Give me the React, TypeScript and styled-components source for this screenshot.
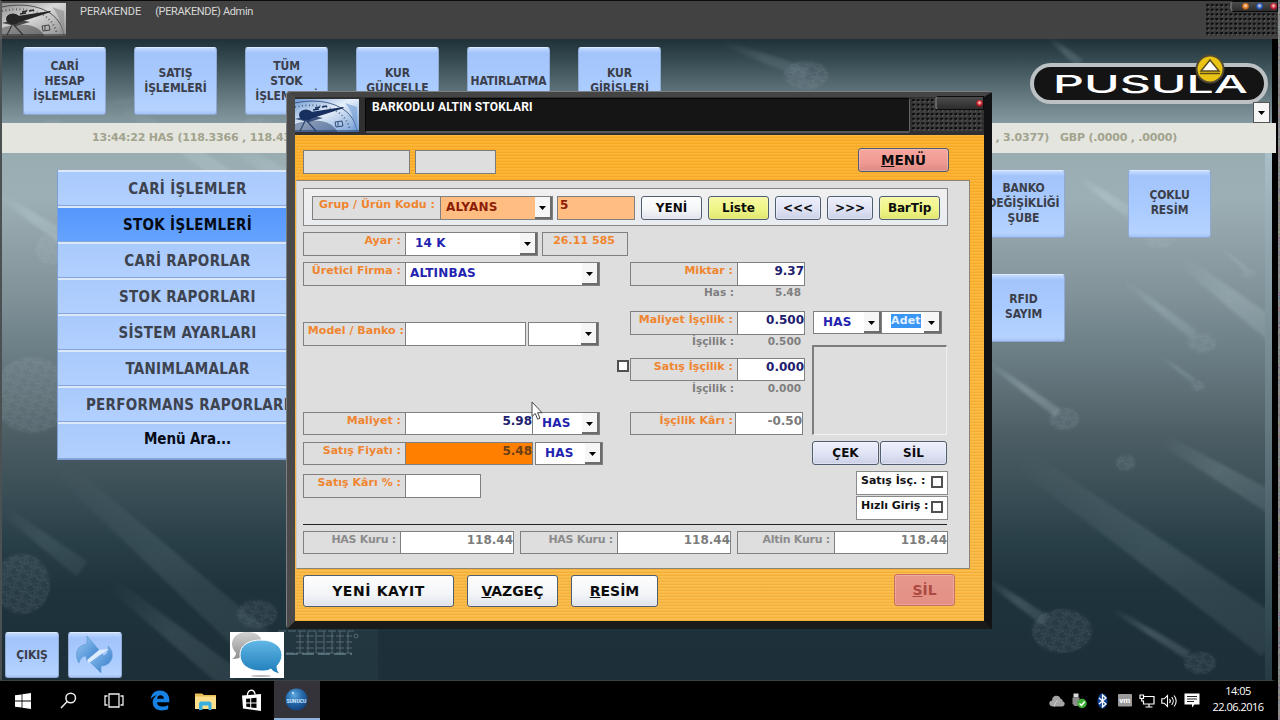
import React from 'react';
import styled, { createGlobalStyle, css } from 'styled-components';

const verdana = '"DejaVu Sans", Verdana, sans-serif';
const tahoma = '"DejaVu Sans Condensed", "DejaVu Sans", Tahoma, sans-serif';

const GlobalStyle = createGlobalStyle`
  * { box-sizing: border-box; }
  body { margin: 0; background: #000; overflow: hidden; font-family: ${verdana}; }
  button { margin: 0; padding: 0; font-family: inherit; }
`;

/* ---------- main window ---------- */

const Screen = styled.div`
  position: relative;
  width: 1280px;
  height: 720px;
  display: flex;
  flex-direction: column;
  overflow: hidden;
`;

const AppTitle = styled.header`
  height: 39px;
  flex: none;
  display: flex;
  align-items: flex-start;
  border-top: 1px solid #0b0b0b;
  border-left: 2px solid #5b5b5b;
  background: #424242;
  padding-top: 2px;
  color: #d8d8d8;
  font: 400 11px/15px Roboto, sans-serif;
`;

const TitleText = styled.span<{ $tight?: boolean }>`
  margin: 1px 14px 0 0;
  white-space: pre;
  letter-spacing: ${(p) => (p.$tight ? '-0.35px' : '-0.05px')};
`;

const TitleLogo = styled.div`
  width: 64px;
  height: 33px;
  margin-right: 14px;
  display: flex;
`;

const dots = css`
  background-color: #3a3a3a;
  background-image: radial-gradient(circle at 1.5px 2px, #0c0c0c 1.1px, transparent 1.5px),
    radial-gradient(circle at 2.5px 3.5px, #6a6a6a 0.5px, transparent 1px);
  background-size: 4.7px 4.7px;
`;

const TitleGrip = styled.div`
  ${dots}
  position: relative;
  width: 71px;
  height: 33px;
  margin-left: auto;
  margin-right: 3px;
`;

const ControlPill = styled.div<{ $w: number; $h: number }>`
  position: absolute;
  top: -2px;
  right: -1px;
  width: ${(p) => p.$w}px;
  height: ${(p) => p.$h}px;
  display: flex;
  align-items: center;
  justify-content: flex-end;
  gap: 7px;
  border: 1px solid #0c0c0c;
  border-left: 2px solid #666;
  border-radius: 4px 0 0 4px;
  background: linear-gradient(#4c4c4c, #2c2c2c);
`;

const Lamp = styled.i<{ $c: string }>`
  width: 7px;
  height: 7px;
  border-radius: 50%;
  background: radial-gradient(circle at 50% 40%, #ffe0d0 0, ${(p) => p.$c} 45%, #16161c 100%);
`;

const Desktop = styled.main`
  position: relative;
  flex: 1;
  display: flex;
  flex-direction: column;
  margin-right: 4px;
  border-left: 2px solid #4b5052;
  border-right: 4px solid #000;
  border-bottom: 1px solid #3b4346;
  background: linear-gradient(
    #203138 0px, #2f434b 15px, #5b6f77 50px, #8599a0 84px, #9aadb2 116px, #9cafb4 160px,
    #91a3a8 200px, #7f9197 262px, #6f8188 305px, #5d6f75 355px, #4b5d63 400px,
    #3b4f57 450px, #2a4049 500px, #1e333c 550px, #1d2f38 642px
  );
`;

const Backdrop = styled.svg`
  position: absolute;
  inset: 0;
`;

const EdgeGlow = styled.div`
  position: absolute;
  top: 114px;
  bottom: 0;
  right: 0;
  width: 7px;
  background: linear-gradient(#a9c0c8, #6d8289 45%, #243b44);
`;

const ShortcutBar = styled.nav`
  position: relative;
  height: 84px;
  flex: none;
  display: flex;
  gap: 28px;
  padding: 8px 0 0 21px;
`;

const Tile = styled.button<{ $small?: boolean }>`
  width: ${(p) => (p.$small ? 54 : 83)}px;
  height: ${(p) => (p.$small ? 46 : 68)}px;
  display: flex;
  align-items: center;
  justify-content: center;
  white-space: pre;
  text-align: center;
  border: 1px solid #8fa9d4;
  border-top-color: #dcebff;
  border-radius: 3px;
  background: linear-gradient(#c3dbff 0, #a3c4fb 5px, #abccff 60%, #b6d3ff 94%, #a3c2f5 100%);
  color: #3b3f4b;
  font: 700 12px/15px ${tahoma};
  letter-spacing: -0.1px;
`;

const ActionTile = styled(Tile)`
  padding-bottom: 2px;
`;

const BrandMark = styled.svg`
  position: absolute;
  left: 1027px;
  top: 15px;
`;

const CurrencyPicker = styled.button`
  position: absolute;
  right: 2px;
  bottom: 0;
  width: 17px;
  height: 21px;
  border: 1px solid #555;
  background: #f5f5f5;
  display: flex;
  align-items: center;
  justify-content: center;
`;

const Ticker = styled.div`
  position: relative;
  height: 30px;
  flex: none;
  display: flex;
  align-items: center;
  justify-content: space-between;
  margin-right: -4px;
  padding: 0 99px 0 90px;
  background: #e4e5df;
  color: #a2a38d;
  font: 700 11px/30px ${verdana};
  letter-spacing: -0.2px;
  white-space: pre;
`;

const Workspace = styled.div`
  position: relative;
  flex: 1;
  display: flex;
  justify-content: space-between;
  padding: 17px 62px 0 55px;
`;

const SideMenu = styled.nav`
  width: 261px;
  height: 290px;
  display: flex;
  flex-direction: column;
  border: 1px solid #7c9fd8;
  border-top: 0;
`;

const SideItem = styled.button<{ $active?: boolean; $search?: boolean }>`
  height: ${(p) => (p.$search ? '37px' : '36px')};
  flex: none;
  border: 0;
  border-top: 2px solid #dbe8fa;
  border-bottom: 1px solid #86a6d9;
  background: ${(p) =>
    p.$active ? 'linear-gradient(#5597fb, #65a3ff)' : 'linear-gradient(#a9cafd, #b2d0ff)'};
  color: ${(p) => (p.$active || p.$search ? '#050a14' : '#3d434f')};
  font: 700 15px/20px ${tahoma};
  letter-spacing: ${(p) => (p.$search ? '-0.1px' : '0.3px')};
  padding-bottom: ${(p) => (p.$search ? '5px' : '0')};
  white-space: nowrap;
`;

const ActionGrid = styled.div`
  display: grid;
  grid-template-columns: 83px 82px;
  grid-auto-rows: 68px;
  column-gap: 63px;
  row-gap: 36px;
  align-content: start;
`;

const BottomTools = styled.div`
  position: relative;
  display: flex;
  gap: 9px;
  padding: 0 0 2px 3px;
`;

const ChatTile = styled.div`
  width: 54px;
  height: 46px;
  margin-left: 99px;
  background: #fff;
`;

/* ---------- dialog ---------- */

const Dialog = styled.section`
  position: absolute;
  left: 287px;
  top: 92px;
  width: 705px;
  height: 537px;
  display: flex;
  flex-direction: column;
  border: solid;
  border-width: 5px 8px 8px 8px;
  border-color: #444 #101214 #1a1a1a #4a4a4a;
  border-radius: 4px 2px 0 3px;
  background: #2d2d2d;
  box-shadow: inset 1px 0 0 #2a2a2a, -1px -1px 0 #7b8183;
`;

const DialogHead = styled.div`
  height: 38px;
  flex: none;
  display: flex;
  gap: 6px;
  padding: 1px 0 3px;
  background: #303030;
`;

const DialogLogo = styled.div`
  width: 64px;
  height: 33px;
  margin-top: 1px;
  display: flex;
`;

const DialogTitle = styled.h1`
  width: 545px;
  height: 35px;
  margin: 0;
  padding: 1px 0 0 6px;
  border: 1px solid #060606;
  border-right-color: #666;
  border-bottom: 2px solid #5a5a5a;
  border-radius: 2px;
  background: #151515;
  color: #fff;
  font: 700 12px/14px Roboto, sans-serif;
  letter-spacing: 0.2px;
`;

const DialogGrip = styled.div`
  ${dots}
  position: relative;
  flex: 1;
  margin: 0 1px 0 -4px;
`;

const DialogBody = styled.div`
  flex: 1;
  display: flex;
  flex-direction: column;
  background: repeating-linear-gradient(#ffffff14 0 1px, transparent 1px 2px, #d8860a30 2px 3px),
    linear-gradient(#fdb02b, #fbb63a 50%, #f9ba46);
`;

const BodyTop = styled.div`
  height: 45px;
  flex: none;
  display: flex;
  gap: 5px;
  align-items: flex-start;
  padding: 13px 35px 0 8px;
  & > :last-child { margin-left: auto; }
`;

const StatusField = styled.div<{ $w: number; $h: number }>`
  width: ${(p) => p.$w}px;
  height: ${(p) => p.$h}px;
  margin-top: 2px;
  border: 1px solid #7c7c7c;
  background: #dedede;
`;

type Tone = 'white' | 'lime' | 'steel' | 'rose' | 'roseOff';
const tones: Record<Tone, string> = {
  white: 'linear-gradient(#fdfdfd, #f3f5f7 60%, #dfe3ea)',
  lime: 'linear-gradient(#f6f9a4, #eef483 60%, #dfe66f)',
  steel: 'linear-gradient(#eef0fb, #dde1f3 60%, #cbd0e6)',
  rose: 'linear-gradient(#f5a79d, #f09a92 60%, #dc8a84)',
  roseOff: 'linear-gradient(#e6988c, #e38f85)',
};

const PushButton = styled.button<{ $w: number; $h?: number; $tone?: Tone; $size?: number; $ls?: number }>`
  width: ${(p) => p.$w}px;
  height: ${(p) => p.$h ?? 24}px;
  flex: none;
  border: 1px solid ${(p) => (p.$tone === 'roseOff' ? '#cc6f5a' : '#4f5d70')};
  border-radius: 3px;
  background: ${(p) => tones[p.$tone ?? 'white']};
  box-shadow: inset 0 0 0 1px ${(p) => (p.$tone === 'steel' ? '#ffffff55' : '#ffffff33')};
  color: ${(p) => (p.$tone === 'roseOff' ? '#ad4a44' : '#0c0c0c')};
  font: 700 ${(p) => p.$size ?? 12}px/16px ${verdana};
  letter-spacing: ${(p) => p.$ls ?? 0}px;
  white-space: nowrap;
`;

const FormPanel = styled.div`
  width: 674px;
  height: 389px;
  flex: none;
  margin-left: 1px;
  padding: 7px 20px 0 6px;
  border: 1px solid #8b8474;
  border-left-color: #ccc;
  background: #dedede;
`;

const GroupBox = styled.div`
  width: 645px;
  height: 38px;
  display: flex;
  align-items: flex-start;
  padding: 7px 0 0 8px;
  border: 1px solid #858585;
  background: linear-gradient(#f0f0f0, #e9ecf0);
  & > ${PushButton} { margin-right: 6px; }
`;

const FormColumns = styled.div`
  display: flex;
  align-items: flex-start;
  height: 299px;
  width: 644px;
  border-bottom: 1px solid #222;
`;

const Column = styled.div<{ $w: number; $pad?: number }>`
  width: ${(p) => p.$w}px;
  flex: none;
  padding-left: ${(p) => p.$pad ?? 0}px;
  display: flex;
  flex-direction: column;
`;

const FieldRow = styled.div<{ $mt: number; $h?: number }>`
  height: ${(p) => p.$h ?? 24}px;
  margin-top: ${(p) => p.$mt}px;
  display: flex;
  flex: none;
  align-items: stretch;
`;

const FieldLabel = styled.label<{ $w: number; $muted?: boolean; $pad?: number }>`
  width: ${(p) => p.$w}px;
  flex: none;
  padding-right: ${(p) => p.$pad ?? 4}px;
  border: 1px solid #808080;
  background: #dedede;
  text-align: right;
  white-space: nowrap;
  color: ${(p) => (p.$muted ? '#8c8c8c' : '#f0852f')};
  font: 700 11px/16px ${verdana};
  letter-spacing: ${(p) => (p.$muted ? '-0.25px' : '0.03px')};
`;

const PurityTag = styled(FieldLabel)`
  margin-left: 4px;
`;

const ValueBox = styled.div<{ $w: number; $c?: string; $bg?: string }>`
  width: ${(p) => p.$w}px;
  flex: none;
  margin-left: -1px;
  padding: 1px 0 0 2px;
  border: 1px solid #808080;
  background: ${(p) => p.$bg ?? '#fff'};
  color: ${(p) => p.$c ?? '#20206e'};
  text-align: right;
  font: 700 12px/15px ${verdana};
`;

const CodeBox = styled(ValueBox)`
  margin: 0 6px 0 4px;
  text-align: left;
`;

const ComboShell = styled.div<{ $w: number; $bg?: string; $c?: string; $gap?: number; $pad?: number }>`
  width: ${(p) => p.$w}px;
  flex: none;
  margin-left: ${(p) => p.$gap ?? -1}px;
  display: flex;
  justify-content: space-between;
  align-items: stretch;
  padding-left: ${(p) => p.$pad ?? 9}px;
  border: 1px solid #808080;
  background: ${(p) => p.$bg ?? '#fff'};
  color: ${(p) => p.$c ?? '#2323b0'};
  font: 700 12px/20px ${verdana};
  letter-spacing: 0.15px;
`;

const ComboDrop = styled.span`
  width: 17px;
  display: flex;
  align-items: center;
  justify-content: center;
  padding-top: 2px;
  border: solid #6c6c6c;
  border-width: 0 2px 2px 0;
  background: #f6f6f6;
`;

const Marked = styled.mark`
  align-self: flex-start;
  margin-top: 2px;
  padding: 0;
  line-height: 14px;
  background: #3a96f4;
  color: #e4f2ff;
  font-size: 11px;
`;

const SubLine = styled.div<{ $mt?: number }>`
  height: 13px;
  margin-top: ${(p) => p.$mt ?? 0}px;
  display: flex;
  flex: none;
  justify-content: flex-end;
  padding-right: 11px;
  color: #7e7e7e;
  font: 700 10.5px/13px ${verdana};
  span { width: 67px; text-align: right; }
  span:first-child { width: auto; }
`;

const CheckBox = styled.i<{ $outside?: boolean }>`
  width: 12px;
  height: 12px;
  flex: none;
  border: 2px solid #505050;
  background: #fdfdfd;
  ${(p) => p.$outside && 'margin: 2px 1px 0 -13px;'}
`;

const CheckCard = styled.div<{ $mt: number }>`
  width: 92px;
  height: 24px;
  margin: ${(p) => p.$mt}px 0 0 auto;
  display: flex;
  justify-content: space-between;
  padding: 0 4px;
  border: 1px solid #8a8a8a;
  background: #fff;
  color: #111;
  font: 700 11px/17px ${verdana};
  white-space: nowrap;
  ${CheckBox} { margin-top: 4px; }
`;

const PictureFrame = styled.div`
  width: 135px;
  height: 90px;
  margin-top: 11px;
  border: solid;
  border-width: 2px 1px 1px 2px;
  border-color: #7d7d7d #efefef #f3f3f3 #7d7d7d;
`;

const PictureActions = styled(FieldRow)`
  gap: 1px;
`;

const Rates = styled.div`
  display: flex;
  gap: 6px;
  margin-top: 6px;
`;

const Rate = styled.div`
  display: flex;
  height: 23px;
`;

const DialogFoot = styled.div`
  flex: 1;
  display: flex;
  gap: 13px;
  align-items: flex-start;
  padding: 6px 29px 0 8px;
  & > :last-child { margin: -1px 0 0 auto; }
`;

const Pointer = styled.svg`
  position: absolute;
  left: 531px;
  top: 401px;
`;

/* ---------- taskbar ---------- */

const Taskbar = styled.footer`
  height: 39px;
  flex: none;
  display: flex;
  align-items: stretch;
  background: #000;
  color: #fff;
  padding-right: 12px;
`;

const TaskButton = styled.div<{ $active?: boolean }>`
  width: 45.7px;
  display: flex;
  align-items: center;
  justify-content: center;
  ${(p) => p.$active && 'background: #333339; border-bottom: 2px solid #8fb4dc;'}
`;

const Tray = styled.div`
  margin-left: auto;
  display: grid;
  grid-template-columns: repeat(7, 22.4px) 65px;
  align-items: center;
  justify-items: center;
`;

const Clock = styled.div`
  padding: 0 0 3px 5px;
  text-align: center;
  font: 400 11px/16px "Open Sans", sans-serif;
  letter-spacing: -0.5px;
`;

const NoiseEdge = styled.svg`
  position: absolute;
  right: 0;
  top: 0;
`;

/* ---------- drawings ---------- */

const Arrow = () => (
  <svg width="7" height="4" viewBox="0 0 7 4"><path d="M0 0h7L3.5 4z" fill="#000" /></svg>
);

const Combo = ({ children, ...rest }: React.ComponentProps<typeof ComboShell>) => (
  <ComboShell {...rest}>
    {typeof children === 'string' ? <span>{children}</span> : children ?? <span />}
    <ComboDrop><Arrow /></ComboDrop>
  </ComboShell>
);

const WatchFace = ({ id, light, mid, dark }: { id: string; light: string; mid: string; dark: string }) => (
  <svg width="64" height="33" viewBox="0 0 64 33">
    <defs>
      <linearGradient id={id} x1="0" y1="0" x2="1" y2="1">
        <stop offset="0" stopColor={mid} />
        <stop offset=".45" stopColor={light} />
        <stop offset="1" stopColor={mid} />
      </linearGradient>
    </defs>
    <rect width="64" height="33" fill={`url(#${id})`} />
    <path d="M0 25c14-5 34-6 42 7v1H0z" fill={dark} opacity=".45" />
    <path d="M0 4C28-2 58 6 62 32" fill="none" stroke={dark} strokeWidth="1" opacity=".7" />
    <path d="M0 8C26 3 50 9 55 31" fill="none" stroke={dark} strokeWidth="2" strokeDasharray="1 2.5" opacity=".6" />
    <path d="M62 8v25h-5C60 24 59 14 50 4" fill={mid} opacity=".6" />
    <ellipse cx="11" cy="16" rx="7" ry="5.500" fill={dark} />
    <path d="M9 14L48 8l1 1L12 21z" fill={dark} />
    <path d="M0 20l14-4 14 3-14 4z" fill={dark} opacity=".8" />
    <path d="M12 22l9 10M10 22L5 32" stroke={dark} strokeWidth="1.200" opacity=".8" />
    <path d="M40 23l7-1 1 5-7 1zM43 23v4" fill="none" stroke={dark} opacity=".8" />
    <path d="M20 9l5-1m2 0l5-1M18 11l6-1" stroke={dark} strokeWidth="1.300" />
    <rect y="31" width="64" height="2" fill={dark} opacity=".5" />
  </svg>
);

const gems: [number, number, number, number][] = [
  [190, 56, 16, 9], [255, 93, 20, 14], [30, 356, 40, 38], [52, 90, 14, 10], [48, 210, 14, 16],
  [804, 36, 22, 14], [1062, 380, 15, 11], [1200, 304, 14, 10], [1157, 200, 16, 9],
  [1060, 592, 30, 22], [1198, 624, 16, 11], [1196, 347, 7, 5], [1124, 424, 10, 8],
  [20, 545, 28, 30], [255, 575, 20, 14], [1246, 234, 7, 5],
];

const beams: [number, number, number, number, number, number][] = [
  [92, 68, 190, 50, 6, 0.1], [112, 60, 300, 190, 20, 0.2], [228, 105, 300, 150, 20, 0.16],
  [0, 158, 60, 198, 13, 0.28], [720, 4, 804, 34, 12, 0.12], [1048, 0, 1078, 24, 9, 0.18],
  [1076, 138, 1128, 174, 11, 0.28], [1122, 242, 1192, 296, 10, 0.2], [1180, 222, 1272, 292, 22, 0.22],
  [984, 322, 1056, 374, 9, 0.28], [1160, 318, 1192, 342, 5, 0.18], [1160, 400, 1272, 465, 22, 0.15],
  [1020, 420, 1272, 600, 42, 0.12], [984, 540, 1044, 582, 11, 0.18], [1110, 570, 1186, 616, 9, 0.2],
  [60, 430, 260, 610, 36, 0.1], [0, 470, 80, 530, 18, 0.1], [110, 545, 230, 641, 24, 0.12],
  [1220, 210, 1244, 230, 4, 0.18],
];

const Scenery = () => (
  <Backdrop width="1270" height="641" viewBox="0 0 1270 641">
    <defs>
      <pattern id="facet" width="11" height="9" patternUnits="userSpaceOnUse" patternTransform="rotate(23)">
        <path d="M0 3l4-3 6 4-4 4-6-2z M4 0l2 8M0 6l10-2" fill="none" stroke="#c6d8dd" strokeWidth=".9" />
      </pattern>
      <filter id="soften" x="-10%" y="-10%" width="120%" height="120%"><feGaussianBlur stdDeviation="1.6" /></filter>
      {beams.map(([x1, y1, x2, y2, , o], i) => (
        <linearGradient key={i} id={`beam${i}`} gradientUnits="userSpaceOnUse" x1={x1} y1={y1} x2={x2} y2={y2}>
          <stop offset="0" stopColor="#c8dde3" stopOpacity="0" />
          <stop offset=".5" stopColor="#c8dde3" stopOpacity={o} />
          <stop offset="1" stopColor="#c8dde3" stopOpacity={o * 0.7} />
        </linearGradient>
      ))}
    </defs>
    <g filter="url(#soften)">
      {beams.map(([x1, y1, x2, y2, w], i) => {
        const len = Math.hypot(x2 - x1, y2 - y1);
        const nx = -(y2 - y1) / len;
        const ny = (x2 - x1) / len;
        const a = w * 0.25;
        const b = w * 0.5;
        return (
          <path
            key={i}
            d={`M${x1 + nx * a} ${y1 + ny * a}L${x2 + nx * b} ${y2 + ny * b}L${x2 - nx * b} ${y2 - ny * b}L${x1 - nx * a} ${y1 - ny * a}z`}
            fill={`url(#beam${i})`}
          />
        );
      })}
      {gems.map(([x, y, rx, ry], i) => (
        <ellipse key={i} cx={x} cy={y} rx={rx} ry={ry} fill="#b4cbd2" opacity=".07" />
      ))}
    </g>
    {gems.map(([x, y, rx, ry], i) => (
      <ellipse key={i} cx={x} cy={y} rx={rx} ry={ry} fill="url(#facet)" opacity=".1" />
    ))}
    <rect x="282" y="590" width="94" height="51" fill="#2b414a" opacity=".4" />
    <g fill="none" stroke="#7b8a90" opacity=".6">
      <path d="M276 592h76M294 597h56M294 603h56M294 609h56M284 614h66" strokeDasharray="8 2" />
      <path d="M298 592v22M306 592v22M314 592v22M322 592v22M330 592v22M338 592v22M346 592v22" />
      <circle cx="354" cy="597" r="2" />
    </g>
    <path d="M284 615h66" stroke="#6f8f9a" strokeWidth="2" strokeDasharray="12 4" opacity=".6" />
  </Backdrop>
);

const Brand = () => (
  <BrandMark width="240" height="56" viewBox="0 0 240 56">
    <rect x="3" y="11" width="234" height="37" rx="18.500" fill="#141414" stroke="#bcc1c4" strokeWidth="4" />
    <text
      x="24" y="39" fill="#fff" fontFamily="Inter, sans-serif" fontWeight="500" fontSize="24"
      textLength="195" lengthAdjust="spacingAndGlyphs"
    >
      PUSULA
    </text>
    <circle cx="181" cy="15" r="13.500" fill="#e9c415" stroke="#504a35" strokeWidth="2" />
    <path d="M181 6l9 11h-18z" fill="#fff" stroke="#5c4c1c" strokeWidth="1.500" />
    <path d="M171 19.500h20" stroke="#5c4c1c" strokeWidth="1.500" />
  </BrandMark>
);

const SyncIcon = () => (
  <svg width="40" height="40" viewBox="0 0 40 40">
    <defs>
      <linearGradient id="sync" x1="0" y1="0" x2="1" y2="1">
        <stop offset="0" stopColor="#9ccdf5" /><stop offset="1" stopColor="#2f76c6" />
      </linearGradient>
    </defs>
    <path d="M4 28C0 22 1 14 6 11c2-1 4-2 6-2L12 1l12 14 2 3-14 8-1-5c-4 0-6 3-7 7z" fill="url(#sync)" stroke="#5a96d4" strokeWidth=".6" />
    <path d="M33 11c5 4 6 12 1 17-2 2-5 3-8 3v7L13 25l13-9 2 5c4-1 6-5 5-10z" fill="url(#sync)" stroke="#5a96d4" strokeWidth=".6" />
    <path d="M12 25l12-10 10-1-9 6-11 8z" fill="#dcecfe" />
  </svg>
);

const ChatIcon = () => (
  <svg width="54" height="46" viewBox="0 0 54 46">
    <defs>
      <linearGradient id="chatBlue" x1="0" y1="0" x2="0" y2="1">
        <stop offset="0" stopColor="#63b8e6" /><stop offset="1" stopColor="#1d7cba" />
      </linearGradient>
      <linearGradient id="chatGrey" x1="0" y1="0" x2="0" y2="1">
        <stop offset="0" stopColor="#d2d2d2" /><stop offset="1" stopColor="#8e8e8e" />
      </linearGradient>
    </defs>
    <path d="M17 0C7 0 2 6 2 12c0 4 2 7 4 9 0 3-2 5-4 6 5 0 8-1 11-4h8c8-2 11-6 11-12S27 0 17 0z" fill="url(#chatGrey)" />
    <path d="M31 8c12 0 21 6 21 15 0 5-3 9-5 11 0 3 1 6 3 8-4-1-7-2-9-5-3 2-6 2-10 2-12 0-21-6-21-16S19 8 31 8z" fill="url(#chatBlue)" stroke="#fff" />
    <ellipse cx="31" cy="44" rx="10" ry="1" fill="#bbb" />
  </svg>
);

const WindowsIcon = () => (
  <svg width="16" height="16" viewBox="0 0 16 16" fill="#fff">
    <path d="M0 2.300l6.600-.9v6.200H0zM7.400 1.300L16 0v7.600H7.400zM0 8.400h6.600v6.200L0 13.700zM7.400 8.400H16V16l-8.600-1.200z" />
  </svg>
);

const SearchIcon = () => (
  <svg width="17" height="17" viewBox="0 0 17 17" fill="none" stroke="#eee" strokeWidth="1.500">
    <circle cx="10.700" cy="6" r="4.800" /><path d="M7.200 9.600L1 16" />
  </svg>
);

const TaskViewIcon = () => (
  <svg width="20" height="15" viewBox="0 0 20 15" fill="none" stroke="#eee" strokeWidth="1.300">
    <path d="M5 1h10v13H5zM3.500 3H1v9h2.500M16.500 3H19v9h-2.500" />
  </svg>
);

const EdgeIcon = () => (
  <svg width="20" height="21" viewBox="0 0 20 21">
    <path
      d="M.5 9.400C1.300 3.800 5 .5 10 .5c6 0 9.300 4.300 9.300 9.500v2.200H7c.1 3 2.600 4.300 5.400 4.300 2.100 0 4-.5 5.800-1.600v4.200c-1.900 1-4.200 1.400-6.400 1.400-5.500 0-9.100-3.300-9.100-8.200 0-3.100 1.700-5.700 4.300-7.100C4.200 5.700 2 7 .5 9.400zM7.100 8.700h6.800c0-2.300-1.300-3.500-3.300-3.500-2.100 0-3.400 1.600-3.500 3.500z"
      fill="#1683e4"
    />
  </svg>
);

const FolderIcon = () => (
  <svg width="21" height="18" viewBox="0 0 21 18">
    <path d="M0 1.500h7l2 1.500h12v14H0z" fill="#e7bd55" />
    <path d="M0 4.500h21V17H0z" fill="#fbdf8c" />
    <path d="M4 18v-6.500c0-1 1-2 2-2h8.500c1 0 2 1 2 2V18h-3v-4.500h-6V18z" fill="#39aee0" />
  </svg>
);

const StoreIcon = () => (
  <svg width="21" height="23" viewBox="0 0 21 23">
    <path d="M6.500 8C6 4 7.500 1.500 10 1.200c2.300-.2 3.800 1.300 4 4.300" fill="none" stroke="#fff" strokeWidth="1.400" />
    <path d="M1 6.500l19-1.500v17L2 19.500z" fill="#fff" />
    <path d="M5 9.800l4.200-.4v4.100H5.200zM10.200 9.300l5.300-.6v4.800h-5.300zM5.200 14.500h4v3.700l-3.900-.5zM10.200 14.500h5.300v4.600l-5.300-.7z" fill="#000" />
  </svg>
);

const GlobeIcon = () => (
  <svg width="23" height="23" viewBox="0 0 23 23">
    <defs>
      <radialGradient id="globe" cx=".4" cy=".3" r=".75">
        <stop offset="0" stopColor="#5fa8dd" /><stop offset=".5" stopColor="#2469ac" /><stop offset="1" stopColor="#123e78" />
      </radialGradient>
    </defs>
    <circle cx="11.500" cy="11.500" r="11" fill="url(#globe)" />
    <circle cx="8" cy="5" r="1.200" fill="#b7e0ff" />
    <text x="1.500" y="14.500" fontFamily="Roboto, sans-serif" fontWeight="700" fontSize="5" fill="#d6eaff">SUNUCU</text>
  </svg>
);

const CloudIcon = () => (
  <svg width="16" height="12" viewBox="0 0 16 12">
    <path d="M4 11.500C1.500 11.500.3 10 .3 8.500c0-1.700 1.300-2.800 2.900-2.900C3 2.500 5 .8 7.500.8c2 0 3.600 1 4 2.900 1.500.2 2.300 1.300 2.200 2.500 1.300.4 2 1.400 2 2.600 0 1.500-1.200 2.700-2.700 2.700z" fill="#a5a5a5" />
    <path d="M5.500 11.500C5.500 8 7 6.500 9 6" stroke="#d6d6d6" fill="none" />
  </svg>
);

const UsbIcon = () => (
  <svg width="15" height="16" viewBox="0 0 15 16">
    <path d="M1.500.5h5v4h-5z" fill="#d8d8d8" /><path d="M.5 4.500h7v6L5.500 13h-3L.5 10.500z" fill="#8d8d8d" />
    <circle cx="10" cy="10.500" r="4.700" fill="#3fae35" /><path d="M7.500 10.500l2 2 3.200-4" stroke="#fff" strokeWidth="1.500" fill="none" />
  </svg>
);

const BluetoothIcon = () => (
  <svg width="15" height="16" viewBox="0 0 15 16">
    <ellipse cx="7.500" cy="8" rx="5" ry="7.500" fill="#0c3f94" />
    <path d="M4 5l7 6-3.500 3V2L11 5l-7 6" fill="none" stroke="#fff" strokeWidth="1.300" />
  </svg>
);

const VmIcon = () => (
  <svg width="14" height="13" viewBox="0 0 14 13">
    <rect width="14" height="12.500" rx="1" fill="#9b9b9b" />
    <text x="1.200" y="8.500" fontFamily="Roboto, sans-serif" fontWeight="700" fontSize="8" fill="#fff">vm</text>
  </svg>
);

const NetworkIcon = () => (
  <svg width="16" height="14" viewBox="0 0 16 14" fill="none" stroke="#fff" strokeWidth="1.200">
    <path d="M5 2.500h10v7.500H4.500V7M6.500 13h7M10 10v3" /><path d="M1 1h3.500v3.500H1zM2.700 4.500V7H5" />
  </svg>
);

const SpeakerIcon = () => (
  <svg width="17" height="14" viewBox="0 0 17 14" fill="none" stroke="#fff" strokeWidth="1.100">
    <path d="M.8 4.800h2.400L6.500 1.500v11L3.200 9.200H.8zM8.500 5c1 1.200 1 2.800 0 4M10.700 3.200c2 2.200 2 5.400 0 7.600M13 1.500c2.900 3.200 2.900 7.800 0 11" />
  </svg>
);

const NoteIcon = () => (
  <svg width="16" height="15" viewBox="0 0 16 15">
    <path d="M.5.500h15V11.500H10.500L8 14.500V11.500H.5z" fill="#fff" />
    <path d="M3 3.500h10M3 6h10M3 8.500h7" stroke="#222" />
  </svg>
);

const shortcuts = [
  'CARİ\nHESAP\nİŞLEMLERİ', 'SATIŞ\nİŞLEMLERİ', 'TÜM\nSTOK\nİŞLEMLERİ',
  'KUR\nGÜNCELLE', 'HATIRLATMA', 'KUR\nGİRİŞLERİ',
];
const menuItems = [
  'CARİ İŞLEMLER', 'STOK İŞLEMLERİ', 'CARİ RAPORLAR', 'STOK RAPORLARI',
  'SİSTEM AYARLARI', 'TANIMLAMALAR', 'PERFORMANS RAPORLARI',
];
const rates: [string, string][] = [
  ['HAS Kuru :', '118.44'], ['HAS Kuru :', '118.44'], ['Altin Kuru :', '118.44'],
];

export default function App() {
  return (
    <Screen>
      <GlobalStyle />
      <AppTitle>
        <TitleLogo><WatchFace id="watchGrey" light="#d9d9d9" mid="#8c8c8c" dark="#262626" /></TitleLogo>
        <TitleText>PERAKENDE</TitleText>
        <TitleText $tight>(PERAKENDE) Admin</TitleText>
        <TitleGrip>
          <ControlPill $w={48} $h={11}>
            <Lamp $c="#e07a1c" /><Lamp $c="#2c62c8" /><Lamp $c="#cc2438" />
          </ControlPill>
        </TitleGrip>
      </AppTitle>

      <Desktop>
        <Scenery />
        <EdgeGlow />
        <ShortcutBar>
          {shortcuts.map((s) => <Tile key={s}>{s}</Tile>)}
          <Brand />
          <CurrencyPicker><Arrow /></CurrencyPicker>
        </ShortcutBar>
        <Ticker>
          <span>13:44:22 HAS (118.3366 , 118.4366)</span>
          <span>USD (2.9 , 3.0377)   GBP (.0000 , .0000)</span>
        </Ticker>
        <Workspace>
          <SideMenu>
            {menuItems.map((m, i) => <SideItem key={m} $active={i === 1}>{m}</SideItem>)}
            <SideItem $search>Menü Ara...</SideItem>
          </SideMenu>
          <ActionGrid>
            <ActionTile>{'BANKO\nDEĞİŞİKLİĞİ\nŞUBE'}</ActionTile>
            <ActionTile>{'ÇOKLU\nRESİM'}</ActionTile>
            <ActionTile>{'RFID\nSAYIM'}</ActionTile>
          </ActionGrid>
        </Workspace>
        <BottomTools>
          <Tile $small>ÇIKIŞ</Tile>
          <Tile $small><SyncIcon /></Tile>
          <ChatTile><ChatIcon /></ChatTile>
        </BottomTools>
      </Desktop>

      <Taskbar>
        <TaskButton><WindowsIcon /></TaskButton>
        <TaskButton><SearchIcon /></TaskButton>
        <TaskButton><TaskViewIcon /></TaskButton>
        <TaskButton><EdgeIcon /></TaskButton>
        <TaskButton><FolderIcon /></TaskButton>
        <TaskButton><StoreIcon /></TaskButton>
        <TaskButton $active><GlobeIcon /></TaskButton>
        <Tray>
          <CloudIcon /><UsbIcon /><BluetoothIcon /><VmIcon /><NetworkIcon /><SpeakerIcon /><NoteIcon />
          <Clock>14:05<br />22.06.2016</Clock>
        </Tray>
      </Taskbar>

      <NoiseEdge width="2" height="720">
        <filter id="grain"><feTurbulence type="turbulence" baseFrequency="0.8" numOctaves="2" /></filter>
        <rect width="2" height="720" fill="#8a8a8a" />
        <rect width="2" height="720" filter="url(#grain)" />
      </NoiseEdge>

      <Dialog>
        <DialogHead>
          <DialogLogo><WatchFace id="watchBlue" light="#e6effa" mid="#6f9bd3" dark="#17305f" /></DialogLogo>
          <DialogTitle>BARKODLU ALTIN STOKLARI</DialogTitle>
          <DialogGrip>
            <ControlPill $w={49} $h={14}><Lamp $c="#c8202c" /></ControlPill>
          </DialogGrip>
        </DialogHead>
        <DialogBody>
          <BodyTop>
            <StatusField $w={107} $h={24} />
            <StatusField $w={81} $h={24} />
            <PushButton $w={91} $tone="rose" $size={13.5}><u>M</u>ENÜ</PushButton>
          </BodyTop>

          <FormPanel>
            <GroupBox>
              <FieldRow $mt={0}>
                <FieldLabel $w={129} $pad={5}>Grup / Ürün Kodu :</FieldLabel>
                <Combo $w={113} $bg="#ffbd82" $c="#8c1c06" $pad={5}>ALYANS</Combo>
                <CodeBox $w={78} $bg="#ffbd82" $c="#8c1c06">5</CodeBox>
              </FieldRow>
              <PushButton $w={61}>YENİ</PushButton>
              <PushButton $w={61} $tone="lime">Liste</PushButton>
              <PushButton $w={46} $tone="steel">{'<<<'}</PushButton>
              <PushButton $w={46} $tone="steel">{'>>>'}</PushButton>
              <PushButton $w={61} $tone="lime" $ls={-0.15}>BarTip</PushButton>
            </GroupBox>

            <FormColumns>
              <Column $w={313}>
                <FieldRow $mt={6}>
                  <FieldLabel $w={103}>Ayar :</FieldLabel>
                  <Combo $w={133}>14 K</Combo>
                  <PurityTag $w={86} $pad={12}>26.11 585</PurityTag>
                </FieldRow>
                <FieldRow $mt={6}>
                  <FieldLabel $w={103}>Üretici Firma :</FieldLabel>
                  <Combo $w={195} $pad={4}>ALTINBAS</Combo>
                </FieldRow>
                <FieldRow $mt={36}>
                  <FieldLabel $w={103} $pad={1}>Model / Banko :</FieldLabel>
                  <ValueBox $w={121} />
                  <Combo $w={71} $gap={2} />
                </FieldRow>
                <FieldRow $mt={66} $h={23}>
                  <FieldLabel $w={103}>Maliyet :</FieldLabel>
                  <ValueBox $w={128}>5.98</ValueBox>
                  <Combo $w={68}>HAS</Combo>
                </FieldRow>
                <FieldRow $mt={7} $h={23}>
                  <FieldLabel $w={103}>Satış Fiyatı :</FieldLabel>
                  <ValueBox $w={128} $bg="#ff8000" $c="#6d3f14">5.48</ValueBox>
                  <Combo $w={68} $gap={2}>HAS</Combo>
                </FieldRow>
                <FieldRow $mt={9}>
                  <FieldLabel $w={103}>Satış Kârı % :</FieldLabel>
                  <ValueBox $w={76} />
                </FieldRow>
              </Column>

              <Column $w={196} $pad={14}>
                <FieldRow $mt={36}>
                  <FieldLabel $w={108}>Miktar :</FieldLabel>
                  <ValueBox $w={68}>9.37</ValueBox>
                </FieldRow>
                <SubLine><span>Has :</span><span>5.48</span></SubLine>
                <FieldRow $mt={12}>
                  <FieldLabel $w={108}>Maliyet İşçilik :</FieldLabel>
                  <ValueBox $w={68}>0.500</ValueBox>
                </FieldRow>
                <SubLine><span>İşçilik :</span><span>0.500</span></SubLine>
                <FieldRow $mt={10} $h={23}>
                  <CheckBox $outside />
                  <FieldLabel $w={108}>Satış İşçilik :</FieldLabel>
                  <ValueBox $w={68}>0.000</ValueBox>
                </FieldRow>
                <SubLine $mt={1}><span>İşçilik :</span><span>0.000</span></SubLine>
                <FieldRow $mt={17} $h={23}>
                  <FieldLabel $w={106} $pad={2}>İşçilik Kârı :</FieldLabel>
                  <ValueBox $w={68} $c="#7b7b7b">-0.50</ValueBox>
                </FieldRow>
              </Column>

              <Column $w={136}>
                <FieldRow $mt={85} $h={23}>
                  <Combo $w={69} $gap={1}>HAS</Combo>
                  <Combo $w={61}><Marked>Adet</Marked></Combo>
                </FieldRow>
                <PictureFrame />
                <PictureActions $mt={6}>
                  <PushButton $w={67} $tone="steel">ÇEK</PushButton>
                  <PushButton $w={67} $tone="steel">SİL</PushButton>
                </PictureActions>
                <CheckCard $mt={6}>Satış İsç. :<CheckBox /></CheckCard>
                <CheckCard $mt={1}>Hızlı Giriş :<CheckBox /></CheckCard>
              </Column>
            </FormColumns>

            <Rates>
              {rates.map(([name, value], i) => (
                <Rate key={i}>
                  <FieldLabel $w={98} $muted>{name}</FieldLabel>
                  <ValueBox $w={114} $c="#7d7d7d">{value}</ValueBox>
                </Rate>
              ))}
            </Rates>
          </FormPanel>

          <DialogFoot>
            <PushButton $w={151} $h={32} $size={14} $ls={0.6}>YENİ KAYIT</PushButton>
            <PushButton $w={91} $h={32} $size={14}><u>V</u>AZGEÇ</PushButton>
            <PushButton $w={87} $h={32} $size={14}><u>R</u>ESİM</PushButton>
            <PushButton $w={61} $h={32} $tone="roseOff" $size={14}><u>S</u>İL</PushButton>
          </DialogFoot>
        </DialogBody>
      </Dialog>

      <Pointer width="12" height="20" viewBox="0 0 12 20">
        <path d="M1 1v14.500l3.300-3 2.300 5.700 2.400-1-2.400-5.500H11z" fill="#fff" stroke="#444" />
      </Pointer>
    </Screen>
  );
}
